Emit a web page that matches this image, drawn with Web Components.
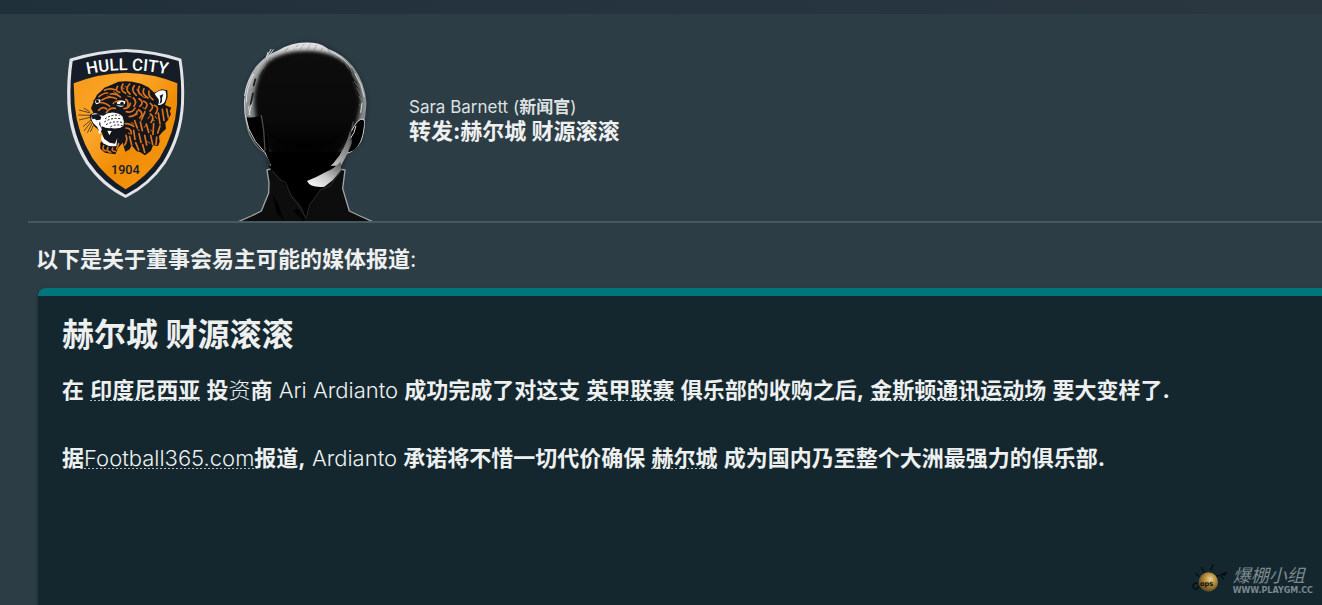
<!DOCTYPE html>
<html lang="zh-CN">
<head>
<meta charset="utf-8">
<meta name="viewport" content="width=device-width, initial-scale=1">
<title>赫尔城 财源滚滚</title>
<style>
  body {
    margin: 0;
    background: #22303a;
    color: #eef0f0;
    font-family: Inter, "Noto Sans CJK SC", sans-serif;
    text-autospace: no-autospace;
  }
  b { font-weight: 700; }
</style>
</head>
<body>
<inbox-message>
  <message-header slot="header">
    <club-crest slot="media"></club-crest>
    <staff-photo slot="media"></staff-photo>
    <span slot="sender">Sara Barnett (<b>新闻官</b>)</span>
    <span slot="subject">转发:赫尔城 财源滚滚</span>
  </message-header>
  <span slot="intro"><b>以下是关于董事会易主可能的媒体报道</b>:</span>
  <news-card>
    <span slot="title">赫尔城 财源滚滚</span>
    <p><b>在</b> <entity-link><b>印度尼西亚</b></entity-link> <b>投</b>资<b>商</b> Ari Ardianto <b>成功完成了对这支</b> <entity-link><b>英甲联赛</b></entity-link> <b>俱乐部的收购之后,</b> <entity-link><b>金斯顿通讯运动场</b></entity-link> <b>要大变样了.</b></p>
    <p><b>据</b><entity-link>Football365.com</entity-link><b>报道,</b> Ardianto <b>承诺将不惜一切代价确保</b> <entity-link><b>赫尔城</b></entity-link> <b>成为国内乃至整个大洲最强力的俱乐部.</b></p>
  </news-card>
</inbox-message>
<site-mark></site-mark>

<script>
class InboxMessage extends HTMLElement {
  constructor() {
    super();
    this.attachShadow({ mode: 'open' });
  }

  connectedCallback() {
    this.shadowRoot.innerHTML = `
      <style>
        :host {
          display: flex;
          flex-direction: column;
          box-sizing: border-box;
          min-height: 100vh;
          padding-top: 14px;
          background: linear-gradient(90deg, #20303b, #2a3741) top / 100% 14px no-repeat, #2d3d45;
        }
        .intro {
          margin: 19px 36px 12px;
          font-size: 22px;
          line-height: 34px;
          font-weight: 400;
        }
        .content {
          flex: 1;
          display: flex;
          flex-direction: column;
          padding-left: 38px;
        }
        ::slotted(news-card) { flex: 1; }
      </style>
      <slot name="header"></slot>
      <p class="intro"><slot name="intro"></slot></p>
      <div class="content"><slot></slot></div>
    `;
  }
}

class MessageHeader extends HTMLElement {
  constructor() {
    super();
    this.attachShadow({ mode: 'open' });
  }

  connectedCallback() {
    this.shadowRoot.innerHTML = `
      <style>
        :host {
          display: flex;
          align-items: center;
          gap: 30px;
          margin-left: 28px;
          padding: 21px 0 0 27px;
          border-bottom: 2px solid #48585f;
        }
        .text { padding-bottom: 18px; line-height: 24px; }
        .sender { font-size: 17px; font-weight: 400; color: #dde1e2; }
        .subject { margin: 0; font-size: 22px; font-weight: 700; line-height: 24px; }
      </style>
      <slot name="media"></slot>
      <div class="text">
        <div class="sender"><slot name="sender"></slot></div>
        <h1 class="subject"><slot name="subject"></slot></h1>
      </div>
    `;
  }
}

class NewsCard extends HTMLElement {
  constructor() {
    super();
    this.attachShadow({ mode: 'open' });
  }

  connectedCallback() {
    this.shadowRoot.innerHTML = `
      <style>
        :host {
          display: block;
          padding: 19px 24px 0;
          border-top: 8px solid #00757b;
          border-radius: 8px 0 0 0;
          background: #14272e;
          box-shadow: 0 2px 4px rgba(0, 0, 0, 0.35);
        }
        h2 {
          margin: 0 0 18px;
          font-size: 32px;
          line-height: 40px;
          font-weight: 700;
        }
        ::slotted(p) {
          margin: 0 0 34px;
          font-size: 22px;
          line-height: 34px;
          font-weight: 300;
        }
      </style>
      <h2><slot name="title"></slot></h2>
      <slot></slot>
    `;
  }
}

class EntityLink extends HTMLElement {
  constructor() {
    super();
    this.attachShadow({ mode: 'open' });
  }

  connectedCallback() {
    // no whitespace around the <a>: it would show up as a space in the sentence
    this.shadowRoot.innerHTML = `<style>
        :host { display: inline; }
        a {
          color: inherit;
          text-decoration: none;
          background: repeating-linear-gradient(90deg, #b4bec1 0 2px, transparent 2px 4px) left bottom 2px / 100% 1px no-repeat;
        }
      </style><a href="#"><slot></slot></a>`;
  }
}

class ClubCrest extends HTMLElement {
  constructor() {
    super();
    this.attachShadow({ mode: 'open' });
  }

  connectedCallback() {
    this.shadowRoot.innerHTML = `
      <style>
        :host { display: block; flex: none; }
        svg { display: block; width: 145px; height: 176px; }
        text { font-family: Roboto, "Liberation Sans", sans-serif; font-weight: 500; }
      </style>
      <svg viewBox="0 0 435 528" role="img" aria-label="Hull City 1904">
        <defs>
          <linearGradient id="amber" x1="0" y1="0" x2="1" y2="1">
            <stop offset="0" stop-color="#f59a18"/>
            <stop offset=".35" stop-color="#fca62b"/>
            <stop offset=".6" stop-color="#f08c05"/>
            <stop offset="1" stop-color="#f79a16"/>
          </linearGradient>
          <path id="arc" d="M72 109Q212 72 362 109"/>
          <clipPath id="fur"><path d="M117 182L138 154L170 134L212 125L258 131L296 152L322 196L348 204L344 235L331 249L326 276L312 288L309 318L288 320L270 346L244 333L228 322L211 335L203 308L197 275L160 230L112 222Z"/></clipPath>
        </defs>
        <!-- shield -->
        <path fill="#e2e4e7" d="M44 56Q128 30 213 27Q300 30 379 56Q390 122 387 190Q382 290 332 370Q286 438 212 474Q140 440 92 370Q42 290 37 190Q34 122 44 56Z"/>
        <path fill="#151d29" d="M53 63Q132 39 213 36Q296 39 371 63Q381 124 378 190Q373 286 324 365Q280 430 212 464Q146 430 101 365Q52 286 47 190Q44 124 53 63Z"/>
        <path fill="url(#amber)" d="M56 130Q130 100 213 98Q298 100 367 130L366 194Q360 278 314 354Q274 412 212 448Q152 412 112 354Q66 278 59 194Z"/>
        <text fill="#fff" font-size="50" text-anchor="middle"><textPath href="#arc" startOffset="50%">HULL CITY</textPath></text>
        <text x="211" y="403" text-anchor="middle" fill="#151d29" font-size="38">1904</text>
        <!-- head -->
        <path fill="#14161c" d="M117 182L126 164L138 154L148 143L170 134L190 125L212 124L232 125L258 131L280 142L298 158L320 148L337 151L338 170L330 195L349 203L344 214L348 222L339 240L331 249L333 266L322 277L312 288L314 305L309 318L294 316L288 332L270 346L256 337L244 333L230 316L224 328L211 335L203 308L190 323L181 343L150 338L136 326L136 308L148 300L141 278L119 260L106 238L104 225L115 218L108 205Z"/>
        <g clip-path="url(#fur)" fill="none" stroke="#dc731f" stroke-linecap="round">
          <g stroke-width="5">
            <path d="M132 170Q146 158 158 159M148 151Q163 143 180 149M141 180Q160 166 184 176M125 188Q150 185 164 199M166 162Q184 159 196 171M188 139Q178 154 194 157M204 132Q192 149 212 160M224 132Q207 148 225 162M238 137Q226 151 244 166M253 139Q244 155 260 166M267 146Q258 161 279 174M282 153Q278 168 294 179"/>
            <path d="M154 218Q164 202 181 205M131 211Q143 197 155 207M175 190Q185 180 199 183M212 178Q222 184 218 199M207 206Q224 204 226 190M235 174Q247 184 237 199M252 176Q270 187 254 199M266 184Q283 191 272 204M286 190Q300 200 285 213M298 196Q315 202 302 221"/>
            <path d="M214 215Q232 220 240 204M223 230Q244 229 247 213M251 209Q269 220 254 234M270 215L259 240M286 222Q301 232 288 247M310 219L315 252M322 208L327 241M335 207L340 233"/>
            <path d="M211 251Q225 250 237 259M213 264Q229 264 229 281M239 242L247 264M256 246L262 272M274 252L281 277M296 251L294 283M315 258L308 279M213 286Q219 301 209 315M224 290L230 315M236 271L240 298M252 281L258 307M269 286L275 315M287 286L293 313M242 308L251 330M263 314L269 337M305 291L303 313"/>
          </g>
          <path stroke-width="3" d="M157 168L168 171M199 143L207 145M218 168L228 171M263 170L272 173M241 221L247 224M291 238L298 242M263 202L271 208M230 248L236 252M287 270L292 274M220 279L225 282M248 269L253 272M278 305L285 310M176 155L188 162M210 139L219 144M245 149L252 156M300 228L306 236M268 262L274 254M279 236L285 228"/>
        </g>
        <!-- ear -->
        <path fill="#fff" d="M299 162Q314 147 331 152Q337 165 330 184Q322 197 309 195Q316 180 306 172Z"/>
        <path fill="#14161c" d="M314 167L325 162Q319 175 321 186L313 193Q319 178 314 167Z"/>
        <!-- eyes -->
        <path fill="#fff" d="M120 179Q131 174 137 180Q136 190 124 193Q117 187 120 179ZM186 187Q196 178 211 184Q211 195 202 200Q190 202 184 195Z"/>
        <circle cx="127" cy="184" r="5" fill="#14161c"/>
        <circle cx="201" cy="190" r="5" fill="#14161c"/>
        <path fill="none" stroke="#14161c" stroke-width="4" d="M178 188Q192 199 214 193M116 184Q122 174 138 176"/>
        <!-- muzzle -->
        <path fill="#fff" d="M111 222Q124 216 134 226L145 227Q160 216 178 218Q195 219 203 230Q209 245 205 258Q192 269 169 264Q155 267 141 259L134 271Q128 270 127 261Q112 249 109 237Z"/>
        <path fill="#14161c" d="M110 224L130 222L139 232L136 239L124 241L119 236L112 238ZM135 243L138 264L132 253Z"/>
        <path fill="none" stroke="#14161c" stroke-width="3" stroke-dasharray="6 5" d="M150 237Q169 222 194 226M148 246Q170 231 202 237M153 254Q176 241 205 248M166 261Q184 250 204 258"/>
        <!-- open mouth -->
        <path fill="#14161c" d="M141 264Q172 270 203 264L207 281L194 305L180 313L155 307L145 286Z"/>
        <path fill="#fff" d="M134 263L141 266L135 283L130 278ZM157 272L170 273L163 286ZM140 284L148 297L164 308L180 311L187 294L184 318Q163 322 144 310L138 296Z"/>
        <path fill="none" stroke="#dc731f" stroke-width="5" stroke-linecap="round" d="M146 317Q139 328 153 333M159 322Q152 332 167 337M173 324Q168 334 181 334M191 311L185 327"/>
        <!-- whiskers -->
        <path fill="none" stroke="#14161c" stroke-width="2" d="M106 219L72 210M105 226L70 225M106 232L72 240M108 240L84 260M109 245L87 273M112 249L97 278M116 254L106 276M104 215L86 204"/>
      </svg>
    `;
  }
}

class StaffPhoto extends HTMLElement {
  constructor() {
    super();
    this.attachShadow({ mode: 'open' });
  }

  connectedCallback() {
    this.shadowRoot.innerHTML = `
      <style>
        :host { display: block; flex: none; }
        svg { display: block; width: 149px; height: 186px; }
      </style>
      <svg viewBox="0 0 447 558" role="img" aria-label="Sara Barnett">
        <defs>
          <filter id="soft" x="-20%" y="-20%" width="140%" height="140%" color-interpolation-filters="sRGB"><feGaussianBlur stdDeviation="7"/></filter>
          <filter id="soft2" x="-20%" y="-20%" width="140%" height="140%" color-interpolation-filters="sRGB"><feGaussianBlur stdDeviation="2"/></filter>
          <linearGradient id="rim" x1="0" y1="0" x2="0" y2="1">
            <stop offset="0" stop-color="#f4f4f4"/>
            <stop offset=".2" stop-color="#b4b6b7"/>
            <stop offset=".5" stop-color="#8c9193"/>
            <stop offset="1" stop-color="#555"/>
          </linearGradient>
          <linearGradient id="face" x1="0" y1="0" x2="0" y2="1">
            <stop offset="0" stop-color="#0d0d0d"/>
            <stop offset=".7" stop-color="#0a0a0a"/>
            <stop offset="1" stop-color="#000"/>
          </linearGradient>
          <linearGradient id="jaw" x1="1" y1="0" x2="0" y2="1">
            <stop offset="0" stop-color="#555"/>
            <stop offset=".55" stop-color="#ccc"/>
            <stop offset="1" stop-color="#fff"/>
          </linearGradient>
          <clipPath id="skull"><path d="M121 392L120 380L103 354Q77 340 57 299Q39 250 43 187Q50 124 84 88Q110 60 145 46Q185 22 232 22Q268 22 294 41Q342 59 370 96Q405 143 410 206L404 258Q405 291 394 319Q377 349 352 356L334 390L334 440L118 440Z"/></clipPath>
        </defs>
        <path fill="#17242a" opacity=".7" filter="url(#soft)" d="M44 188Q60 70 160 38Q240 0 315 47Q400 92 412 210L396 320L350 360L338 400L112 400L108 360Q45 320 44 188Z"/>
        <!-- head with the light rim -->
        <g clip-path="url(#skull)">
          <rect width="447" height="440" fill="url(#rim)"/>
          <path fill="url(#face)" filter="url(#soft)" d="M72 190Q78 118 116 78Q162 46 235 49Q306 50 354 88Q390 132 394 200Q384 276 354 325Q306 396 225 396Q126 390 96 318Q72 250 72 190Z"/>
          <path fill="#000" d="M50 246Q66 250 84 244L104 252L118 350L350 350L352 351L333 380L334 440L118 440L126 395L103 352Q52 310 50 246Z" filter="url(#soft2)"/>
          <path fill="url(#face)" d="M86 190Q90 118 128 81Q170 54 235 54Q304 56 344 93Q378 132 378 195Q377 250 350 290Q306 345 225 345Q136 340 106 290Q86 250 86 190Z" filter="url(#soft)"/>
          <path fill="none" stroke="#4c4c4c" stroke-width="4" filter="url(#soft2)" d="M94 240L101 285L105 348M370 260L351 352"/>
          <path fill="#000" d="M372 274Q393 243 402 258Q401 321 369 349L353 352Q373 318 361 303Z"/>
          <path fill="url(#jaw)" filter="url(#soft2)" d="M361 284Q346 345 310 385Q280 416 231 438Q244 458 283 456Q321 442 334 407L335 388Q366 349 361 284Z"/>
          <path fill="none" stroke="#d8d8d8" stroke-width="3" d="M365 287Q383 250 399 252Q407 256 403 279Q398 327 373 347L352 355M362 309Q374 294 378 272M43 190Q38 290 105 353L121 392"/>
        </g>
        <!-- hair strands -->
        <g fill="none" stroke-linecap="round">
          <path stroke="#7d8284" stroke-width="2" d="M70 125L79 134L73 151M64 167L76 145M53 208L67 172M61 219L72 190M95 107L106 87M126 76L116 67M164 48L174 40M190 44L204 30M211 42L221 29M232 44L240 29M252 45L259 31M273 48L279 36M300 54L295 43M318 67L313 54M338 82L329 66M356 101L345 85M367 115L361 99M378 137L366 118M385 156L372 139M392 180L380 159M398 203L388 184M399 217L388 209"/>
          <path stroke="#d9dcdd" stroke-width="3" d="M44 182Q48 145 68 118M49 201Q47 160 72 118M112 63L123 43M116 64L130 44M109 67L114 52M180 43Q230 24 278 38M309 52Q338 66 363 97M375 116Q397 148 403 185M66 204L57 238M56 215L60 240M396 205L392 232"/>
          <path stroke="#1c1c1c" stroke-width="5" d="M76 133L71 151M69 175L62 207M369 143L385 190M101 105L91 125"/>
        </g>
        <!-- collar and shoulders -->
        <path fill="#000" d="M118 392L335 392L334 450L300 500L160 500L118 440Z"/>
        <path fill="#0d0d0d" d="M25 560L64 543L94 528L116 474L117 443L111 405L122 402L160 440L228 480L285 451L334 403L345 405L338 461L358 528L390 543L428 560Z"/>
        <path fill="none" stroke="#a0a4a6" stroke-width="4" stroke-linejoin="round" d="M25 560L64 543L94 528L116 474L117 443L111 405L122 402M334 403L345 405L338 461L358 528L390 543L428 560"/>
        <path fill="#000" d="M122 403L150 430L186 481L214 511L228 552L246 502L276 461L300 430L261 455L217 455L159 430L125 389Z"/>
        <path fill="none" stroke="#2c2c2c" stroke-width="3" d="M127 407L150 434L166 442L184 483L216 525L228 552L239 510L271 465L301 452L334 407"/>
        <path fill="#000" opacity=".8" d="M128 480L144 505L163 558L139 533ZM228 552L202 520L190 527L220 558L256 520Z"/>
        <path fill="url(#jaw)" d="M231 438Q260 426 289 410Q311 402 332 380L334 405L308 436L283 455Q241 459 231 438Z" filter="url(#soft2)"/>
      </svg>
    `;
  }
}

class SiteMark extends HTMLElement {
  constructor() {
    super();
    this.attachShadow({ mode: 'open' });
  }

  connectedCallback() {
    this.shadowRoot.innerHTML = `
      <style>
        :host {
          position: absolute;
          right: 9px;
          bottom: 7px;
          display: flex;
          align-items: center;
          gap: 4px;
          color: #7c898e;
        }
        svg { display: block; width: 40px; height: 34px; }
        .name { font: italic 400 18px/20px "Liberation Sans", "Noto Sans CJK SC", sans-serif; }
        .url { font: 700 8px/10px "DejaVu Sans", sans-serif; }
      </style>
      <svg viewBox="0 0 120 102" aria-hidden="true">
        <defs>
          <radialGradient id="ball" cx=".6" cy=".35" r=".65">
            <stop offset="0" stop-color="#e9d49a"/>
            <stop offset=".45" stop-color="#b98f38"/>
            <stop offset="1" stop-color="#5f4a22"/>
          </radialGradient>
        </defs>
        <path fill="none" stroke="#080d10" stroke-width="4" stroke-linecap="round" d="M20 29L30 37M37 11L46 25M72 2L66 17M76 36L94 34L110 27M94 34L104 45M24 57Q5 60 15 73Q25 79 30 66"/>
        <path fill="#080d10" d="M94 31L116 22L107 36Z"/>
        <circle cx="58" cy="54" r="29" fill="url(#ball)"/>
        <text x="33" y="67" fill="#0b0d0e" font-family="DejaVu Sans, sans-serif" font-size="20" font-weight="700">ops</text>
      </svg>
      <div>
        <div class="name">爆棚小组</div>
        <div class="url">WWW.PLAYGM.CC</div>
      </div>
    `;
  }
}

customElements.define('inbox-message', InboxMessage);
customElements.define('message-header', MessageHeader);
customElements.define('news-card', NewsCard);
customElements.define('entity-link', EntityLink);
customElements.define('club-crest', ClubCrest);
customElements.define('staff-photo', StaffPhoto);
customElements.define('site-mark', SiteMark);
</script>
</body>
</html>
